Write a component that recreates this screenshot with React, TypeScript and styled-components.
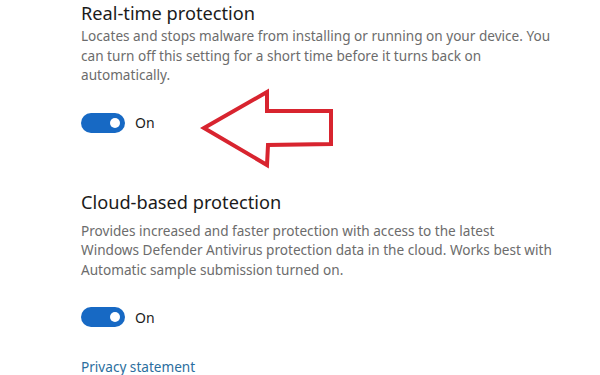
import styled, { createGlobalStyle } from 'styled-components'

const GlobalStyle = createGlobalStyle`
  html, body {
    margin: 0;
    padding: 0;
    background: #ffffff;
  }
  body {
    font-family: 'Noto Sans', 'Open Sans', sans-serif;
  }
`

const Page = styled.div`
  width: 600px;
  height: 375px;
  overflow: hidden;
  position: relative;
  background: #ffffff;
  padding: 0 0 0 81px;
  box-sizing: border-box;
`

const Section = styled.section<{ $gap: number }>`
  display: flex;
  flex-direction: column;
  margin-bottom: ${({ $gap }) => $gap}px;
`

const Title = styled.h2`
  margin: 0;
  font-size: 18.2px;
  font-weight: 400;
  line-height: 26px;
  color: #1b1b1b;
`

const Description = styled.p<{ $offset: number }>`
  margin: ${({ $offset }) => $offset}px 0 0;
  font-size: 13.6px;
  line-height: 19.5px;
  color: #6c6c6c;
  white-space: nowrap;
`

const ToggleRow = styled.div`
  display: flex;
  align-items: center;
  gap: 10px;
  margin-top: 28px;
`

const Track = styled.span`
  width: 44px;
  height: 20px;
  border-radius: 10px;
  background: #1769c4;
  display: flex;
  align-items: center;
  justify-content: flex-end;
  padding-right: 5px;
  box-sizing: border-box;
`

const Knob = styled.span`
  width: 10px;
  height: 10px;
  border-radius: 50%;
  background: #ffffff;
`

const ToggleLabel = styled.span`
  font-size: 14px;
  color: #1b1b1b;
`

const Link = styled.a`
  display: block;
  margin-top: 30px;
  font-size: 13.6px;
  color: #2b6e9e;
  text-decoration: none;
`

const Arrow = styled.svg`
  position: absolute;
  left: 0;
  top: 0;
  pointer-events: none;
`

function Toggle() {
  return (
    <ToggleRow>
      <Track>
        <Knob />
      </Track>
      <ToggleLabel>On</ToggleLabel>
    </ToggleRow>
  )
}

export default function App() {
  return (
    <>
      <GlobalStyle />
      <Page>
        <Section $gap={56}>
          <Title>Real-time protection</Title>
          <Description $offset={0}>
            Locates and stops malware from installing or running on your device. You
            <br />
            can turn off this setting for a short time before it turns back on
            <br />
            automatically.
          </Description>
          <Toggle />
        </Section>
        <Section $gap={0}>
          <Title>Cloud-based protection</Title>
          <Description $offset={6}>
            Provides increased and faster protection with access to the latest
            <br />
            Windows Defender Antivirus protection data in the cloud. Works best with
            <br />
            Automatic sample submission turned on.
          </Description>
          <Toggle />
          <Link href="#">Privacy statement</Link>
        </Section>
        <Arrow width="600" height="375" viewBox="0 0 600 375">
          <polygon
            points="204,128 267,92 267,111 331,111 331,144 268,145 267,165"
            fill="none"
            stroke="#d8242f"
            strokeWidth="4"
            strokeLinejoin="miter"
          />
        </Arrow>
      </Page>
    </>
  )
}
